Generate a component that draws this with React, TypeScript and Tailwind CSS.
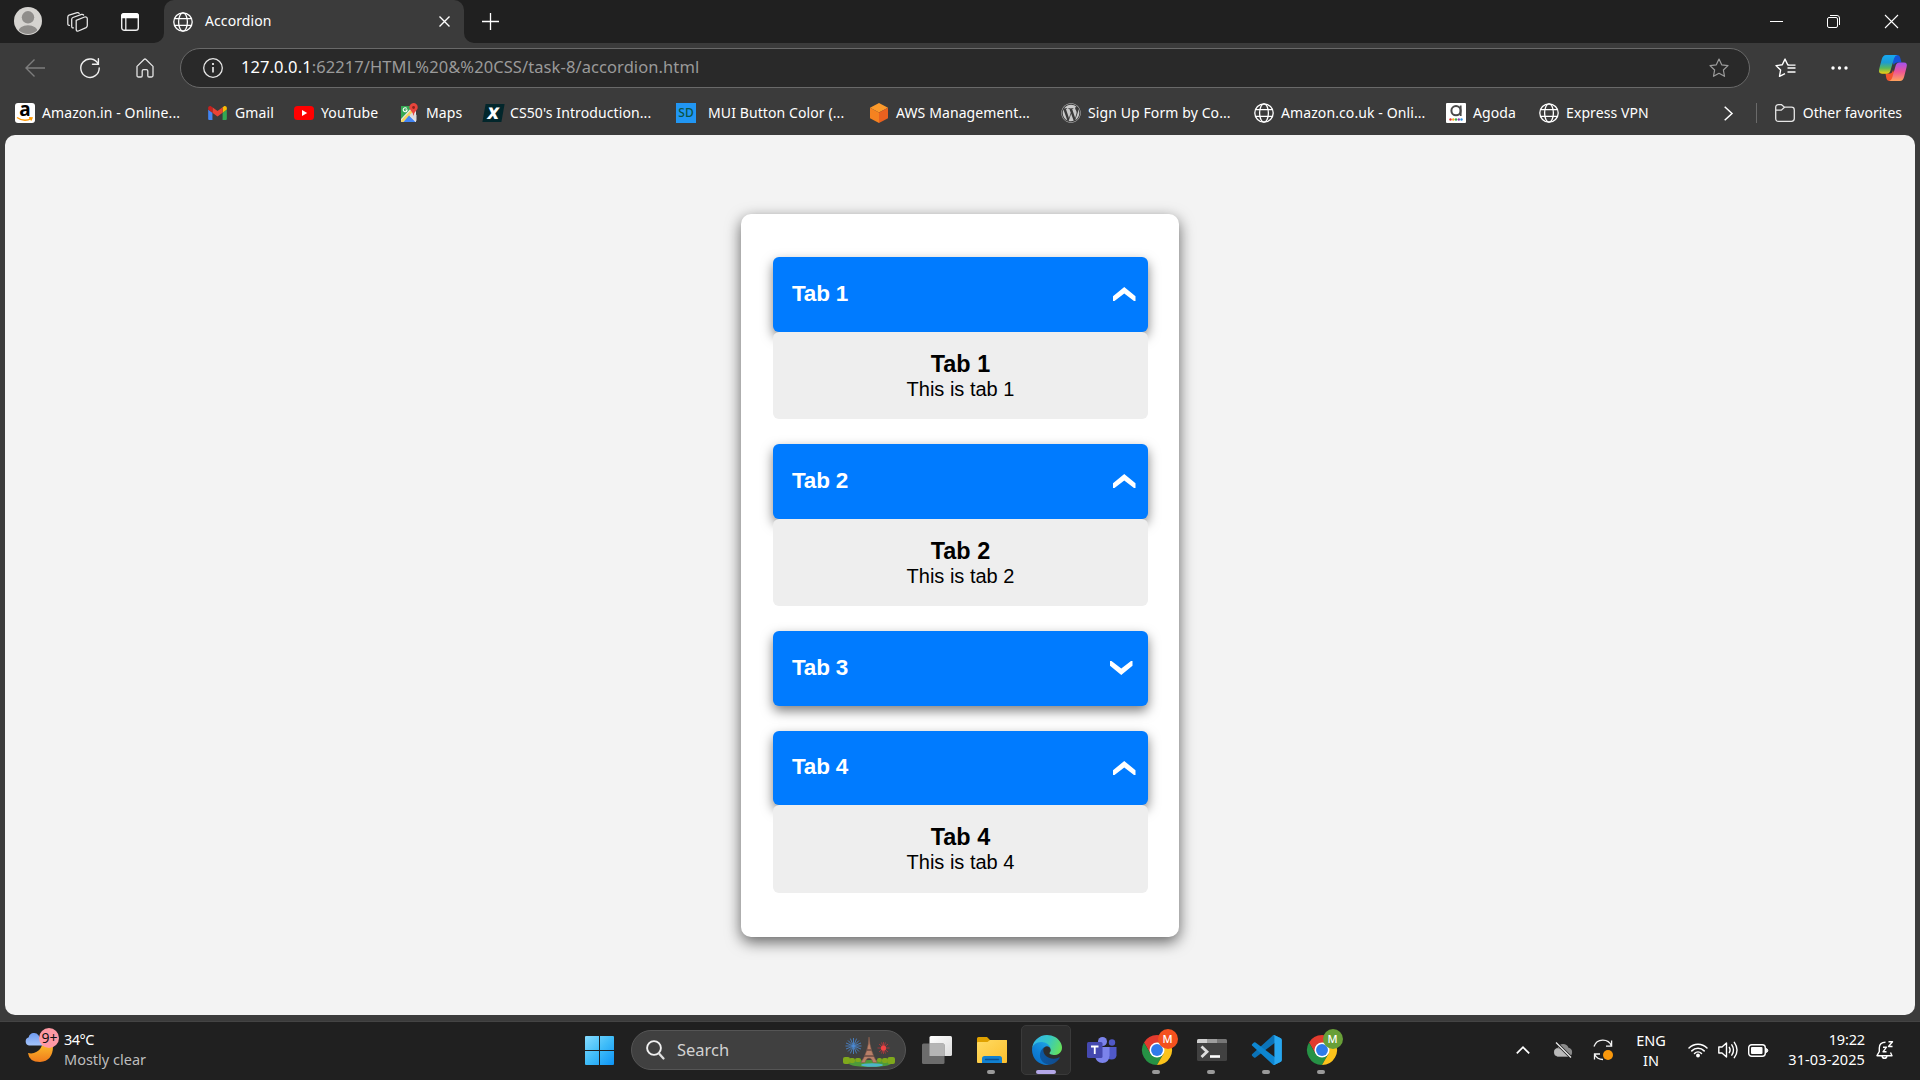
import React from "react";
import { FaWordpress } from "react-icons/fa";

type IconProps = {
  w?: number;
  h?: number;
  box?: string;
  className?: string;
  children: React.ReactNode;
};

function Icon({ w = 20, h = 20, box, className = "", children }: IconProps) {
  return (
    <svg
      width={w}
      height={h}
      viewBox={box ?? `0 0 ${w} ${h}`}
      fill="none"
      className={`block shrink-0 overflow-visible ${className}`}
    >
      {children}
    </svg>
  );
}

function Globe({ className = "" }: { className?: string }) {
  return (
    <Icon className={className}>
      <g stroke="#fff" strokeWidth="1.3">
        <circle cx="10" cy="10" r="9.2" />
        <ellipse cx="10" cy="10" rx="4.4" ry="9.2" />
        <path d="M1.7 6.6H18.3M1.7 13.4H18.3" />
      </g>
    </Icon>
  );
}

/* ---------- Browser tab strip ---------- */

function TabStrip() {
  return (
    <div className="flex h-[43px] items-center bg-[#202020]">
      <Icon w={28} h={28} className="mb-px ml-[14px]">
        <clipPath id="avatar">
          <circle cx="14" cy="14" r="13" />
        </clipPath>
        <circle cx="14" cy="14" r="14" fill="#d5d3d0" />
        <g fill="#8f8d8b" clipPath="url(#avatar)">
          <circle cx="14" cy="10.3" r="6.2" />
          <ellipse cx="14" cy="25" rx="10" ry="6.8" />
        </g>
      </Icon>
      <Icon w={21} h={20} className="ml-[25px]">
        <g stroke="#e8e8e8" strokeWidth="1.25" strokeLinejoin="round" strokeLinecap="round">
          <path d="M9.2 8.3 17.6 5q2.7-.4 2.7 2v6.6q0 1.4-1.2 2L11.4 19q-2.1.6-2.2-1.6Z" />
          <path d="M6.4 15.9q-1.5.2-1.7-1.4V7.2q0-1.2 1.2-1.7l8.7-3.1q1.2-.3 2 .6" />
          <path d="M2.5 13.3Q.8 13.5.8 11.7V4.9Q.8 3.7 2 3.2L10.2.7q1.2-.3 2 .6" />
        </g>
      </Icon>
      <Icon w={18} h={18} className="ml-[33px]">
        <rect x=".7" y=".7" width="16.6" height="16.6" rx="2.6" stroke="#eee" strokeWidth="1.4" />
        <path d="M0 5.2V3Q0 0 3 0H15Q18 0 18 3V5.2Z" fill="#fff" />
        <path d="M4.8 5V17" stroke="#eee" strokeWidth="1.3" />
      </Icon>
      <div className="relative ml-[25px] flex h-[43px] w-[300px] items-center rounded-t-[10px] bg-[#3b3b3b]">
        <Icon w={10} h={10} className="absolute bottom-0 -left-[10px]">
          <path d="M10 0A10 10 0 0 1 0 10H10Z" fill="#3b3b3b" />
        </Icon>
        <Icon w={10} h={10} className="absolute -right-[10px] bottom-0">
          <path d="M0 0A10 10 0 0 0 10 10H0Z" fill="#3b3b3b" />
        </Icon>
        <Globe className="ml-[9px]" />
        <span className="mb-[2px] ml-[12px] text-[14px] tracking-[0.1px] text-white">Accordion</span>
        <Icon w={11} h={11} className="mr-[14px] ml-auto">
          <path d="M.5.5 10.5 10.5M10.5.5.5 10.5" stroke="#fff" strokeWidth="1.4" />
        </Icon>
      </div>
      <Icon w={17} h={17} className="mb-[1px] ml-[18px]">
        <path d="M8.5 0V17M0 8.5H17" stroke="#fff" strokeWidth="1.3" />
      </Icon>
      <Icon w={13} h={13} className="ml-auto">
        <path d="M0 6.5H13" stroke="#fff" />
      </Icon>
      <Icon w={13} h={13} className="ml-[44px]">
        <rect x=".5" y="2.5" width="10" height="10" rx="1.5" stroke="#fff" />
        <path d="M3 .5H10Q12.5.5 12.5 3V10" stroke="#fff" />
      </Icon>
      <Icon w={13} h={13} className="mr-[22px] ml-[45px]">
        <path d="M0 0 13 13M13 0 0 13" stroke="#fff" strokeWidth="1.1" />
      </Icon>
    </div>
  );
}

/* ---------- Address bar ---------- */

const STAR =
  "M10 1.1 12.7 6.8 19 7.6 14.4 12 15.5 18.3 10 15.3 4.5 18.3 5.6 12 1 7.6 7.3 6.8Z";

function Toolbar() {
  return (
    <div className="flex h-[49px] items-center">
      <Icon className="ml-[25px]" h={18}>
        <path d="M20 9H1M9.5.6 1 9 9.5 17.4" stroke="#7d7d7d" strokeWidth="1.4" />
      </Icon>
      <Icon className="ml-[35px]">
        <path d="M18.2 6A9.2 9.2 0 1 0 19.2 10" stroke="#f0f0f0" strokeWidth="1.4" strokeLinecap="round" />
        <path d="M18.4.8V6.3H12.5" stroke="#f0f0f0" strokeWidth="1.4" strokeLinecap="round" />
      </Icon>
      <Icon w={18} h={20} className="ml-[36px]">
        <path
          d="M1 8.4 8 1.5Q9 .6 10 1.5L17 8.4V17.5Q17 19 15.5 19H13Q11.8 19 11.8 17.8V13Q11.8 11.6 10.4 11.6H7.6Q6.2 11.6 6.2 13V17.8Q6.2 19 5 19H2.5Q1 19 1 17.5Z"
          stroke="#e4e4e4"
          strokeWidth="1.3"
          strokeLinejoin="round"
        />
      </Icon>
      <div className="ml-[26px] flex h-[40px] w-[1570px] items-center rounded-full border border-[#696969] bg-[#292929]">
        <Icon className="ml-[22px]">
          <circle cx="10" cy="10" r="9.3" stroke="#e6e6e6" strokeWidth="1.3" />
          <path d="M10 9V14.5" stroke="#fff" strokeWidth="1.5" />
          <circle cx="10" cy="6" r="1.1" fill="#fff" />
        </Icon>
        <span className="ml-[18px] text-[16.5px] tracking-[0.085px] whitespace-nowrap text-[#9a9a9a]">
          <span className="text-white">127.0.0.1</span>
          :62217/HTML%20&amp;%20CSS/task-8/accordion.html
        </span>
        <Icon className="mr-[20px] ml-auto">
          <path d={STAR} stroke="#9c9c9c" strokeWidth="1.2" strokeLinejoin="round" />
        </Icon>
      </div>
      <Icon w={21} className="ml-[25px]">
        <path
          d="M14.5 7.1 12.7 6.8 10 1.1 7.3 6.8 1 7.6 5.6 12 4.5 18.3 10 15.6M12.5 10H20.5M12.5 14H20.5M12.5 7.1H20.5"
          stroke="#fff"
          strokeWidth="1.4"
          strokeLinejoin="round"
        />
      </Icon>
      <Icon w={17} h={4} className="ml-[35px]">
        <g fill="#fff">
          <circle cx="2" cy="2" r="1.7" />
          <circle cx="8.5" cy="2" r="1.7" />
          <circle cx="15" cy="2" r="1.7" />
        </g>
      </Icon>
      <Icon w={28} h={26} className="ml-[31px]">
        <defs>
          <linearGradient id="cpL" x1="0" y1="0" x2="0" y2="1">
            <stop offset="0" stopColor="#16a8f2" />
            <stop offset=".4" stopColor="#1c9bd2" />
            <stop offset=".7" stopColor="#58b85c" />
            <stop offset="1" stopColor="#f3cf10" />
          </linearGradient>
          <linearGradient id="cpR" x1="0" y1="0" x2="0" y2="1">
            <stop offset="0" stopColor="#a151f0" />
            <stop offset=".5" stopColor="#ee5596" />
            <stop offset="1" stopColor="#ffa35c" />
          </linearGradient>
        </defs>
        <path d="M14 0H18Q20.5 0 21.3 3L22.5 7.5H18Q15.5 7.5 14.8 10L13 6Z" fill="#1553d8" />
        <path d="M6.5 18.5H11Q13 18.5 14 15L16 20 14 26H10.5Q8 26 7.3 23Z" fill="#f2542d" />
        <path
          d="M7 0H18.5Q16 .4 15 3.5L11.5 15.5Q10.5 18.7 7.5 18.7H3Q-1 18.7.3 13.5L2.7 4.5Q3.9 0 7 0Z"
          fill="url(#cpL)"
        />
        <path
          d="M21 26H10Q12.5 25.5 13.4 22L16.7 10.5Q17.7 7.4 20.5 7.4H25Q28.8 7.4 27.6 12L25.2 21.5Q24 26 21 26Z"
          fill="url(#cpR)"
        />
      </Icon>
    </div>
  );
}

/* ---------- Favorites bar ---------- */

function AmazonIcon() {
  return (
    <span className="relative flex size-5 shrink-0 justify-center rounded-[3px] bg-white">
      <span className="-mt-[5px] text-[19px] leading-[22px] font-bold text-black">a</span>
      <Icon w={16} h={5} className="absolute bottom-[1px] left-[2px]">
        <path d="M0 .5Q7 5.5 14.5 1.5M12 .7 15 .8 14 3.4" stroke="#f90" strokeWidth="1.4" />
      </Icon>
    </span>
  );
}

function GmailIcon() {
  return (
    <Icon w={19} h={14} box="52 42 88 66">
      <path d="M58 108h14V74L52 59v43c0 3.32 2.69 6 6 6" fill="#4285f4" />
      <path d="M120 108h14c3.32 0 6-2.69 6-6V59l-20 15" fill="#34a853" />
      <path d="M120 48v26l20-15v-8c0-7.42-8.47-11.65-14.4-7.2" fill="#fbbc04" />
      <path d="M72 74V48l24 18 24-18v26L96 92" fill="#ea4335" />
      <path d="M52 51v8l20 15V48l-5.6-4.2c-5.94-4.45-14.4-.22-14.4 7.2" fill="#c5221f" />
    </Icon>
  );
}

function YouTubeIcon() {
  return (
    <Icon h={14}>
      <rect width="20" height="14" rx="3.5" fill="#f00" />
      <path d="M8 4V10L13.2 7Z" fill="#fff" />
    </Icon>
  );
}

function MapsIcon() {
  return (
    <Icon w={18}>
      <path d="M1 3H16V19H1Z" fill="#e8e8e8" />
      <path d="M1 3H13L1 16Z" fill="#34a853" />
      <path d="M1 17.5 11 7 14 9 3.5 19H1Z" fill="#f4d35e" />
      <path d="M3.5 19 9 12.5 15.5 19Z" fill="#4285f4" />
      <path d="M9.5 12 13 9 16.5 12V18Z" fill="#dcdcdc" />
      <path d="M6.8 5.5A2 2 0 1 0 7.2 7H5.4" stroke="#fff" strokeWidth="1.1" />
      <path d="M13.5 13Q13 9.5 10.8 7.5A4.2 4.2 0 1 1 16.5 7.3Q14 9.5 13.5 13Z" fill="#e8453c" />
      <circle cx="13.6" cy="4.5" r="1.4" fill="#8e231d" />
    </Icon>
  );
}

function EdxIcon() {
  return (
    <span className="flex h-[18px] w-[19px] shrink-0 -skew-x-[10deg] items-center justify-center bg-[#02262b]">
      <span className="text-[16px] leading-none font-black text-white">X</span>
    </span>
  );
}

function SdIcon() {
  return (
    <span className="flex size-5 shrink-0 items-center justify-center bg-[#2196f3] text-[12px] font-medium text-[#0b5345]">
      SD
    </span>
  );
}

function AwsIcon() {
  return (
    <Icon w={18}>
      <path d="M9 0 18 4.8 9 9.5 0 4.8Z" fill="#fb9a2c" />
      <path d="M0 4.8 9 9.5V20L0 15.2Z" fill="#f58220" />
      <path d="M18 4.8 9 9.5V20L18 15.2Z" fill="#e9611f" />
    </Icon>
  );
}

function AgodaIcon() {
  return (
    <Icon>
      <rect width="20" height="20" rx="1" fill="#fff" />
      <circle cx="10" cy="7.7" r="4.6" stroke="#4a4a4a" strokeWidth="2" />
      <path d="M14.7 2.5V13" stroke="#4a4a4a" strokeWidth="1.8" />
      <circle cx="4.5" cy="16.5" r="1.2" fill="#e12d2d" />
      <circle cx="7.3" cy="16.5" r="1.2" fill="#f6a81c" />
      <circle cx="10" cy="16.5" r="1.2" fill="#3dae48" />
      <circle cx="12.8" cy="16.5" r="1.2" fill="#8a3fb0" />
      <circle cx="15.5" cy="16.5" r="1.2" fill="#2a8fe0" />
    </Icon>
  );
}

const BOOKMARKS = [
  { label: "Amazon.in - Online...", icon: <AmazonIcon />, cell: "w-[193px]", pad: "gap-[7px]" },
  { label: "Gmail", icon: <GmailIcon />, cell: "w-[86px]", pad: "gap-[8px]" },
  { label: "YouTube", icon: <YouTubeIcon />, cell: "w-[106px]", pad: "gap-[7px]" },
  { label: "Maps", icon: <MapsIcon />, cell: "w-[84px]", pad: "gap-[8px]" },
  { label: "CS50's Introduction...", icon: <EdxIcon />, cell: "w-[192px]", pad: "gap-[7px]" },
  { label: "MUI Button Color (...", icon: <SdIcon />, cell: "w-[194px]", pad: "gap-[12px]" },
  { label: "AWS Management...", icon: <AwsIcon />, cell: "w-[191px]", pad: "gap-[8px]" },
  {
    label: "Sign Up Form by Co...",
    icon: <FaWordpress className="size-5 shrink-0 text-[#c9c9c9]" />,
    cell: "w-[193px]",
    pad: "gap-[7px]",
  },
  { label: "Amazon.co.uk - Onli...", icon: <Globe />, cell: "w-[192px]", pad: "gap-[7px]" },
  { label: "Agoda", icon: <AgodaIcon />, cell: "w-[93px]", pad: "gap-[7px]" },
  { label: "Express VPN", icon: <Globe />, cell: "w-[120px]", pad: "gap-[7px]" },
];

function FavoritesBar() {
  return (
    <div className="flex h-[43px] items-center pb-px pl-[15px] text-[14px] tracking-[0.1px] whitespace-nowrap text-white">
      {BOOKMARKS.map((b) => (
        <div key={b.label} className={`flex shrink-0 items-center ${b.cell} ${b.pad}`}>
          {b.icon}
          <span className="mb-px">{b.label}</span>
        </div>
      ))}
      <Icon w={9} h={15} className="ml-auto">
        <path d="M.7.7 8 7.5.7 14.3" stroke="#fff" strokeWidth="1.5" />
      </Icon>
      <div className="ml-[23px] h-5 w-px bg-[#6a6a6a]" />
      <Icon w={20} h={18} className="ml-[18px]">
        <path
          d="M.7 3.5Q.7.7 3.5.7H6.5L9.5 3.2H16.5Q19.3 3.2 19.3 6V14.5Q19.3 17.3 16.5 17.3H3.5Q.7 17.3.7 14.5ZM.7 6.2H6.3L9.5 3.2"
          stroke="#e6e6e6"
          strokeWidth="1.3"
        />
      </Icon>
      <span className="mr-[18px] mb-px ml-[8px] tracking-normal">Other favorites</span>
    </div>
  );
}

/* ---------- Page content ---------- */

const SECTIONS = [
  { n: 1, open: true, head: "h-[75px]", body: "h-[87px]" },
  { n: 2, open: true, head: "h-[75px]", body: "h-[87px]" },
  { n: 3, open: false, head: "h-[75px]", body: "" },
  { n: 4, open: true, head: "h-[74px]", body: "h-[88px]" },
];

function Accordion() {
  return (
    <div className="flex h-[723px] w-[438px] flex-col gap-[25px] rounded-[10px] bg-white pt-[43px] pl-[32px] font-['Liberation_Sans',Arial,sans-serif] shadow-[0_5px_15px_rgba(0,0,0,0.6)]">
      {SECTIONS.map((s) => (
        <section key={s.n} className="w-[375px]">
          <div
            className={`flex items-center justify-between rounded-[6px] bg-[#007bff] pb-px pl-[19px] shadow-[0_5px_12px_rgba(0,0,0,0.5)] ${s.head} ${
              s.open ? "pr-[12.5px]" : "pr-[16px]"
            }`}
          >
            <span className="mb-px text-[22.5px] leading-[26px] font-bold tracking-[-0.2px] text-white">
              Tab {s.n}
            </span>
            <Icon w={22.5} h={14} className={s.open ? "" : "rotate-180"}>
              <path d="M0 9.2 11.25 0 22.5 9.2V14H21L11.25 6.6 1.5 14H0Z" fill="#fff" />
            </Icon>
          </div>
          {s.open && (
            <div className={`rounded-[6px] bg-[#eee] pt-[19px] text-center text-black ${s.body}`}>
              <h3 className="text-[23.4px] leading-[27px] font-bold">Tab {s.n}</h3>
              <p className="text-[20px] leading-[23px]">This is tab {s.n}</p>
            </div>
          )}
        </section>
      ))}
    </div>
  );
}

/* ---------- Taskbar ---------- */

function Weather() {
  return (
    <Icon w={40} h={40} className="ml-[20px]">
      <defs>
        <linearGradient id="moon" x1="0" y1="0" x2="0" y2="1">
          <stop offset="0" stopColor="#fbb829" />
          <stop offset="1" stopColor="#f07b1c" />
        </linearGradient>
        <linearGradient id="cloud" x1="0" y1="0" x2="0" y2="1">
          <stop offset="0" stopColor="#6f9bf0" />
          <stop offset="1" stopColor="#a4c4fa" />
        </linearGradient>
      </defs>
      <path d="M22 15A11.5 11.5 0 0 1 8 23Q9 32 20 32Q33 31 33 16Z" fill="url(#moon)" />
      <path d="M9 15.5A4.3 4.3 0 0 1 8.7 7.2A5.5 5.5 0 0 1 18.5 5.2L24 15.5Z" fill="url(#cloud)" />
      <circle cx="29" cy="8" r="10" fill="#ff99a4" />
      <text x="21.5" y="13" fontSize="14" fill="#111" fontFamily="Noto Sans, sans-serif">
        9+
      </text>
    </Icon>
  );
}

function SearchArt() {
  return (
    <Icon w={52} h={30}>
      <ellipse cx="27" cy="26.5" rx="21" ry="3.5" fill="#4e9a3a" />
      <ellipse cx="29" cy="28" rx="11" ry="1.8" fill="#4db6c9" />
      <g fill="#7fa81c">
        <rect x="0" y="20" width="7" height="7" rx="2" />
        <rect x="6" y="21" width="6" height="5" rx="2" />
        <rect x="12" y="21" width="6" height="4" rx="2" />
        <rect x="34" y="21" width="5" height="4" rx="2" />
        <rect x="39" y="21" width="6" height="5" rx="2" />
        <rect x="44.5" y="20" width="7.5" height="7" rx="2" />
      </g>
      <path
        d="M26 0Q25.7 14 18 25.5H22Q23 21 26 21T30 25.5H34Q27 14 26 0Z"
        fill="#b98068"
        stroke="#8a5c4c"
        strokeWidth=".6"
      />
      <path d="M23.5 13H28.5M21 19H31" stroke="#6b4b44" strokeWidth="1.3" />
      <path
        d="M10.5 1V17M2.5 9H18.5M5 3.5 16 14.5M16 3.5 5 14.5M7.4 1.6 13.6 16.4M13.6 1.6 7.4 16.4M3 6 18 12M18 6 3 12"
        stroke="#4b8bd8"
        strokeWidth=".8"
      />
      <path
        d="M40.5 5V17M34.5 11H46.5M36 7 45 15M45 7 36 15M38.5 5.5 42.5 16.5M42.5 5.5 38.5 16.5"
        stroke="#c9353b"
        strokeWidth=".7"
      />
      <circle cx="40.5" cy="11" r="2.6" fill="#f04444" />
    </Icon>
  );
}

function TaskCell({ bar, children }: { bar?: "dot" | "active"; children: React.ReactNode }) {
  return (
    <div className="relative flex h-[50px] w-[55px] shrink-0 items-center justify-center">
      {bar === "active" && (
        <div className="absolute inset-y-0 left-[2px] w-[50px] rounded-[5px] border border-[#3a3a3a] bg-[#2d2d2d]" />
      )}
      <div className="relative">{children}</div>
      {bar === "dot" && (
        <div className="absolute bottom-[1px] left-[23px] h-[4px] w-[8px] rounded-full bg-[#9a9a9a]" />
      )}
      {bar === "active" && (
        <div className="absolute bottom-[1px] left-[17px] h-[4px] w-[20px] rounded-full bg-[#b4a7e8]" />
      )}
    </div>
  );
}

function Chrome({ tint }: { tint: string }) {
  return (
    <div className="relative">
      <Icon w={30} h={30} box="0 0 48 48">
        <path d="M24 12H44.785A24 24 0 0 0 3.215 12L13.608 30Z" fill="#e33b2e" />
        <path d="M13.608 30 3.215 12A24 24 0 0 0 24 48L34.392 30Z" fill="#269245" />
        <path d="M34.392 30 24 48A24 24 0 0 0 44.785 12H24Z" fill="#fcc31b" />
        <circle cx="24" cy="24" r="12" fill="#fff" />
        <circle cx="24" cy="24" r="9.5" fill="#2f7bea" />
      </Icon>
      <span
        className={`absolute -top-[6px] left-[16px] flex size-5 items-center justify-center rounded-full text-[11px] font-medium text-white ${tint}`}
      >
        M
      </span>
    </div>
  );
}

function EdgeLogo() {
  return (
    <Icon w={30} h={30} box="0 0 256 256">
      <defs>
        <linearGradient id="eg1" x1="0" y1=".5" x2="1" y2=".5">
          <stop offset="0" stopColor="#0c59a4" />
          <stop offset="1" stopColor="#114a8b" />
        </linearGradient>
        <linearGradient id="eg2" x1=".8" y1=".2" x2=".3" y2="1">
          <stop offset="0" stopColor="#1b9de2" />
          <stop offset=".5" stopColor="#0f80d6" />
          <stop offset="1" stopColor="#0a70c8" />
        </linearGradient>
        <linearGradient id="eg3" x1="0" y1=".3" x2="1" y2=".6">
          <stop offset="0" stopColor="#33b6ea" />
          <stop offset=".5" stopColor="#36c7c4" />
          <stop offset="1" stopColor="#66e25a" />
        </linearGradient>
      </defs>
      <path
        d="M231 190.5c-3.4 1.8-6.9 3.4-10.5 4.7a101.5 101.5 0 0 1-35.9 6.4c-47.3 0-88.5-32.5-88.5-74.3a31.5 31.5 0 0 1 16.4-27.3c-42.8 1.8-53.8 46.4-53.8 72.5 0 74 68.1 81.4 82.8 81.4 7.9 0 19.8-2.3 27-4.6l1.3-.4a128.3 128.3 0 0 0 66.6-52.8 4 4 0 0 0-5.4-5.6z"
        fill="url(#eg1)"
      />
      <path
        d="M105.7 241.4a79.2 79.2 0 0 1-22.7-21.3 80.7 80.7 0 0 1 29.5-120c3.2-1.5 8.5-4.1 15.6-4a32.4 32.4 0 0 1 25.7 13 31.9 31.9 0 0 1 6.3 18.7c0-.2 24.5-79.6-80-79.6-43.9 0-80 41.6-80 78.2a130.2 130.2 0 0 0 12.1 56 128 128 0 0 0 156.4 67 75.5 75.5 0 0 1-62.8-8z"
        fill="url(#eg2)"
      />
      <path
        d="M152.3 148.9c-.9 1-3.4 2.5-3.4 5.6 0 2.6 1.7 5.1 4.7 7.2 14.4 10 41.5 8.7 41.6 8.7 10.7 0 21.1-2.9 30.3-8.3A61.4 61.4 0 0 0 256 109.1c.3-22.4-8-37.3-11.3-43.9C223.5 23.9 177.7.3 128 .3a128 128 0 0 0-128 126.2c.5-36.5 36.8-66 80-66 3.5 0 23.5.3 42 10.1 16.3 8.5 24.9 18.9 30.8 29.2 6.2 10.7 7.3 24.1 7.3 29.5 0 5.3-2.7 13.3-7.8 19.9z"
        fill="url(#eg3)"
      />
    </Icon>
  );
}

function VsCodeLogo() {
  return (
    <Icon w={30} h={30} box="0 0 256 254">
      <path
        d="M246.135 26.873L193.409 1.487a15.94 15.94 0 0 0-18.188 3.092L2.661 161.918a10.66 10.66 0 0 0 .012 15.77l14.1 12.817a10.66 10.66 0 0 0 13.612.606L238.189 33.447c6.971-5.289 16.986-.316 16.986 8.437v-.612a16 16 0 0 0-9.04-14.4z"
        fill="#0b73b8"
      />
      <path
        d="M246.135 226.816l-52.726 25.386a15.94 15.94 0 0 1-18.188-3.092L2.661 91.771a10.66 10.66 0 0 1 .012-15.77l14.1-12.817a10.66 10.66 0 0 1 13.612-.606l207.804 157.664c6.971 5.289 16.986.316 16.986-8.437v.612a16 16 0 0 1-9.04 14.4z"
        fill="#0d86d1"
      />
      <path
        d="M193.428 252.134a15.95 15.95 0 0 1-18.192-3.095c5.903 5.903 15.997 1.722 15.997-6.626V11.276c0-8.348-10.094-12.53-15.997-6.626a15.95 15.95 0 0 1 18.192-3.095l52.718 25.352A16 16 0 0 1 255.175 41.33v170.957a16 16 0 0 1-9.029 14.424z"
        fill="#27a7f0"
      />
    </Icon>
  );
}

function Taskbar() {
  return (
    <div className="flex h-[59px] items-center border-t border-[#444] bg-[#202020] pb-[2px] text-white">
      <Weather />
      <div className="mb-[2px] ml-[4px] flex w-[521px] flex-col text-[14.5px] leading-[20px]">
        <span className="tracking-[-0.5px]">34°C</span>
        <span className="text-[#bdbdbd]">Mostly clear</span>
      </div>
      <Icon w={29} h={29}>
        <defs>
          <linearGradient id="win" x1="0" y1="0" x2="29" y2="29" gradientUnits="userSpaceOnUse">
            <stop offset="0" stopColor="#86dcff" />
            <stop offset=".5" stopColor="#3fbcf8" />
            <stop offset="1" stopColor="#0d93f5" />
          </linearGradient>
        </defs>
        <path d="M0 1Q0 0 1 0H14V14H0ZM15 0H28Q29 0 29 1V14H15ZM0 15H14V29H1Q0 29 0 28ZM15 15H29V28Q29 29 28 29H15Z" fill="url(#win)" />
      </Icon>
      <div className="ml-[17px] flex h-[40px] w-[275px] items-center rounded-full border border-[#555] bg-[#404040]">
        <Icon w={19} h={20} className="ml-[14px]">
          <circle cx="8" cy="8" r="6.9" stroke="#f0f0f0" strokeWidth="1.9" />
          <path d="M13 13.5 17.5 18.5" stroke="#e0e0e0" strokeWidth="2.3" strokeLinecap="round" />
        </Icon>
        <span className="ml-[12px] text-[16.5px] text-[#d2d2d2]">Search</span>
        <div className="mt-[4px] mr-[10px] ml-auto">
          <SearchArt />
        </div>
      </div>
      <div className="ml-[3px] flex items-center">
        <TaskCell>
          <Icon w={30} h={28}>
            <defs>
              <linearGradient id="tv" x1="0" y1="0" x2="1" y2="1">
                <stop offset="0" stopColor="#fff" />
                <stop offset="1" stopColor="#dcdcdc" />
              </linearGradient>
            </defs>
            <rect x="7.5" width="22.5" height="20" rx="1.5" fill="url(#tv)" />
            <rect y="7.5" width="22.5" height="20.5" rx="1.5" fill="#6c6c6c" />
            <path d="M7.5 7.5H21Q22.5 7.5 22.5 9V20H7.5Z" fill="#b5b5b5" />
          </Icon>
        </TaskCell>
        <TaskCell bar="dot">
          <Icon w={30} h={26}>
            <defs>
              <linearGradient id="fo" x1="0" y1="0" x2="1" y2="1">
                <stop offset="0" stopColor="#ffdb63" />
                <stop offset="1" stopColor="#fcbf2d" />
              </linearGradient>
            </defs>
            <path d="M0 1.5Q0 0 1.5 0H10L13 3H30V9H0Z" fill="#e0a100" />
            <path d="M0 6Q0 5 1 5H10.5L13 3H29Q30 3 30 4V25Q30 26 29 26H1Q0 26 0 25Z" fill="url(#fo)" />
            <path d="M5 26V21.5Q5 19 7.5 19H22.5Q25 19 25 21.5V26Z" fill="#1180d0" />
            <path d="M8.5 22.5H21.5" stroke="#084f91" strokeWidth="1.4" strokeLinecap="round" />
          </Icon>
        </TaskCell>
        <TaskCell bar="active">
          <EdgeLogo />
        </TaskCell>
        <TaskCell>
          <Icon w={30} h={26}>
            <circle cx="15.5" cy="4.5" r="4.5" fill="#7b83eb" />
            <circle cx="25" cy="5.5" r="3.2" fill="#5059c9" />
            <path d="M19 10H29.5V18.5Q29 22.5 24.5 22.5 20 22.5 19 18Z" fill="#5059c9" />
            <path d="M8 10H22.5V18.5Q22 26 15.5 26 9 26 8 18.5Z" fill="#7b83eb" />
            <rect y="5" width="15.5" height="16" rx="1.5" fill="#4549b0" />
            <path d="M4 9.5H11.5M7.75 9.5V17" stroke="#fff" strokeWidth="1.8" />
          </Icon>
        </TaskCell>
        <TaskCell bar="dot">
          <Chrome tint="bg-[#f4511e]" />
        </TaskCell>
        <TaskCell bar="dot">
          <Icon w={30} h={22}>
            <rect width="30" height="22" rx="1.5" fill="#414141" />
            <path d="M0 4V1.5Q0 0 1.5 0H10V4Z" fill="#cfcfcf" />
            <path d="M10 0H20V4H10Z" fill="#9d9d9d" />
            <path d="M20 0H28.5Q30 0 30 1.5V4H20Z" fill="#777" />
            <path d="M4.5 7.5 10 12.8 4.5 18" stroke="#ddd" strokeWidth="2.8" />
            <path d="M13 17.5H23" stroke="#fff" strokeWidth="2.6" />
          </Icon>
        </TaskCell>
        <TaskCell bar="dot">
          <VsCodeLogo />
        </TaskCell>
        <TaskCell bar="dot">
          <Chrome tint="bg-[#689f38]" />
        </TaskCell>
      </div>
      <Icon w={14} h={8} className="ml-auto">
        <path d="M.8 7.4 7 1.2 13.2 7.4" stroke="#fff" strokeWidth="1.7" />
      </Icon>
      <Icon w={20} h={16} className="ml-[23px]">
        <path d="M4.5 14.5A4.3 4.3 0 0 1 4.6 6A5.8 5.8 0 0 1 15.5 5.8A4.5 4.5 0 0 1 16 14.5Z" fill="#8a8a8a" />
        <path d="M4.5 14.5A4.3 4.3 0 0 1 3.5 6.5Q8 6 11 9.5L16 14.5Z" fill="#b9b9b9" />
        <path d="M3 .5 18 15.5" stroke="#202020" strokeWidth="3" />
        <path d="M3 .5 18 15.5" stroke="#eee" strokeWidth="1.3" />
      </Icon>
      <Icon w={20} h={20} className="ml-[20px]">
        <g stroke="#f4f4f4" strokeWidth="1.3">
          <path d="M1 6.5A9.3 9.3 0 0 1 18.5 6M18.6.5V6.2H13" />
          <path d="M1.5 19.5V14H7M1.8 14.5Q4 19.5 10 19.5" />
        </g>
        <circle cx="15" cy="15" r="5" fill="#f9980c" />
      </Icon>
      <div className="ml-[20px] flex w-[36px] flex-col items-center text-[14.5px] leading-[20px]">
        <span>ENG</span>
        <span>IN</span>
      </div>
      <Icon w={20} h={16} className="ml-[19px]">
        <g stroke="#fff" strokeWidth="1.5" strokeLinecap="round">
          <path d="M1 6A12.5 12.5 0 0 1 19 6" />
          <path d="M3.8 8.9A8.7 8.7 0 0 1 16.2 8.9" />
          <path d="M6.5 11.5A5 5 0 0 1 13.5 11.5" />
        </g>
        <circle cx="10" cy="13.5" r="1.9" fill="#fff" />
      </Icon>
      <Icon w={20} h={18} className="ml-[10px]">
        <g stroke="#fff" strokeWidth="1.4" strokeLinecap="round" strokeLinejoin="round">
          <path d="M.8 6H4L8.5 2V16L4 12H.8Z" />
          <path d="M11.3 6.3Q13 9 11.3 11.7M13.8 3.8Q17.2 9 13.8 14.2M16.3 1.3Q21.8 9 16.3 16.7" />
        </g>
      </Icon>
      <Icon w={20} h={13} className="ml-[10px]">
        <rect x=".7" y=".7" width="16.6" height="11.6" rx="3" stroke="#fff" strokeWidth="1.4" />
        <rect x="3" y="3" width="11.5" height="7" rx="1" fill="#fff" />
        <path d="M18.3 4.5Q19.8 5 19.8 6.5T18.3 8.5Z" fill="#fff" stroke="#fff" />
      </Icon>
      <div className="mb-[2px] ml-[17px] flex w-[80px] flex-col items-end text-[14.5px] leading-[20px] whitespace-nowrap">
        <span className="tracking-[-0.15px]">19:22</span>
        <span className="tracking-[0.1px]">31-03-2025</span>
      </div>
      <Icon w={18} h={18} className="mr-[26px] ml-[11px]">
        <g stroke="#fff" strokeWidth="1.4" strokeLinejoin="round">
          <path d="M9.5 1.2Q3.3 1.2 3.3 7V10.5L1 14.7H16L14.5 11.5" />
          <path d="M6 15Q6.5 17.3 8.5 17.3T11 15" />
          <path d="M7 6.2H10.5L7 10.8H10.5" />
          <path d="M12.5.7H16.5L12.5 5.5H16.5" />
        </g>
      </Icon>
    </div>
  );
}

export default function App() {
  return (
    <div className="flex h-[1080px] w-[1920px] flex-col overflow-hidden bg-[#3b3b3b] font-['Noto_Sans',sans-serif]">
      <TabStrip />
      <Toolbar />
      <FavoritesBar />
      <main className="mx-[5px] mb-[6px] flex h-[880px] justify-center rounded-[10px] bg-[#f3f3f3] pt-[79px]">
        <Accordion />
      </main>
      <Taskbar />
    </div>
  );
}
